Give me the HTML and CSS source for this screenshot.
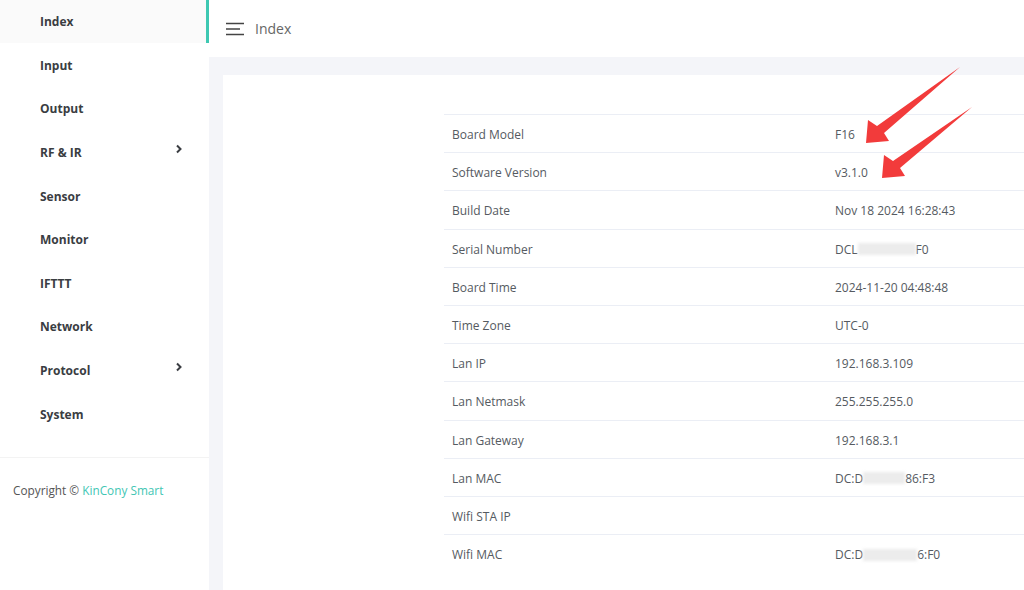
FILE: index.html
```html
<!DOCTYPE html>
<html lang="en">
<head>
    <meta charset="UTF-8">
    <meta name="viewport" content="width=device-width, initial-scale=1.0">
    <title>KinCony</title>
    <link rel="stylesheet" href="styles.css">
</head>
<body>
    <aside class="sidebar">
        <nav class="menu">
            <a class="menu-item active">Index</a>
            <a class="menu-item">Input</a>
            <a class="menu-item">Output</a>
            <a class="menu-item">RF &amp; IR <svg class="chevron" viewBox="0 0 8 10"><path d="M2 1.5 L5.5 5 L2 8.5" /></svg></a>
            <a class="menu-item">Sensor</a>
            <a class="menu-item">Monitor</a>
            <a class="menu-item">IFTTT</a>
            <a class="menu-item">Network</a>
            <a class="menu-item">Protocol <svg class="chevron" viewBox="0 0 8 10"><path d="M2 1.5 L5.5 5 L2 8.5" /></svg></a>
            <a class="menu-item">System</a>
        </nav>
        <div class="copyright">Copyright &copy; <span class="brand">KinCony Smart</span></div>
    </aside>

    <div class="main">
        <header class="topbar">
            <svg class="burger" viewBox="0 0 20 14">
                <path d="M1 1.5 H19 M1 7 H15 M1 12.5 H19" />
            </svg>
            <span class="page-title">Index</span>
        </header>

        <div class="content">
            <div class="card">
                <div class="info-table">
                    <div class="row"><div class="key">Board Model</div><div class="value">F16</div></div>
                    <div class="row"><div class="key">Software Version</div><div class="value">v3.1.0</div></div>
                    <div class="row"><div class="key">Build Date</div><div class="value">Nov 18 2024 16:28:43</div></div>
                    <div class="row"><div class="key">Serial Number</div><div class="value">DCL<span class="blur" style="width:58px"></span>F0</div></div>
                    <div class="row"><div class="key">Board Time</div><div class="value">2024-11-20 04:48:48</div></div>
                    <div class="row"><div class="key">Time Zone</div><div class="value">UTC-0</div></div>
                    <div class="row"><div class="key">Lan IP</div><div class="value">192.168.3.109</div></div>
                    <div class="row"><div class="key">Lan Netmask</div><div class="value">255.255.255.0</div></div>
                    <div class="row"><div class="key">Lan Gateway</div><div class="value">192.168.3.1</div></div>
                    <div class="row"><div class="key">Lan MAC</div><div class="value">DC:D<span class="blur" style="width:42px"></span>86:F3</div></div>
                    <div class="row"><div class="key">Wifi STA IP</div><div class="value"></div></div>
                    <div class="row"><div class="key">Wifi MAC</div><div class="value">DC:D<span class="blur" style="width:54px"></span>6:F0</div></div>
                </div>
            </div>
        </div>

        <!-- annotation arrows -->
        <svg class="arrows" viewBox="209 0 815 590">
            <polygon points="866,143 868,120 877,126 960,67 884,133 889,141" />
            <polygon points="882,178 884,155 893,161 972,107 900,168 905,176" />
        </svg>
    </div>
</body>
</html>
```

FILE: styles.css
```css
body {
    margin: 0;
    padding: 0;
    display: flex;
    height: 590px;
    overflow: hidden;
    font-family: "Open Sans", "Liberation Sans", sans-serif;
    color: #555;
    background-color: #f4f5f9;
}

.sidebar {
    width: 209px;
    flex-shrink: 0;
    background: white;
    display: flex;
    flex-direction: column;
}

.menu {
    padding-bottom: 21px;
    border-bottom: 1px solid #f3f3f3;
}

.menu-item {
    display: flex;
    align-items: center;
    justify-content: space-between;
    box-sizing: border-box;
    height: 43.6px;
    padding: 0 26px 0 40px;
    font-size: 12px;
    font-weight: 700;
    color: #3a3d42;
    cursor: pointer;
}

.menu-item.active {
    background-color: #fafafa;
    border-right: 3px solid #3ec8b2;
    height: 42.6px;
    margin-bottom: 1px;
}

.chevron {
    width: 8px;
    height: 10px;
    margin-top: -8px;
    fill: none;
    stroke: #3a3d42;
    stroke-width: 2;
}

.copyright {
    padding: 24px 0 0 13px;
    font-size: 11.8px;
    color: #555;
}

.brand {
    color: #42c6b4;
}

.main {
    flex: 1;
    min-width: 0;
    position: relative;
    overflow: hidden;
    display: flex;
    flex-direction: column;
}

.topbar {
    height: 57px;
    flex-shrink: 0;
    background: white;
    display: flex;
    align-items: center;
    padding-left: 16px;
}

.burger {
    width: 20px;
    height: 14px;
    fill: none;
    stroke: #444;
    stroke-width: 1.6;
}

.page-title {
    margin-left: 10px;
    font-size: 14px;
    color: #666;
}

.content {
    flex: 1;
    min-height: 0;
    padding: 18px 0 0 14px;
    display: flex;
}

.card {
    flex: 1;
    background: white;
    padding-top: 39px;
}

.info-table {
    margin-left: 221px;
}

.row {
    display: flex;
    align-items: center;
    box-sizing: border-box;
    height: 38.2px;
    padding-top: 2px;
    border-top: 1px solid #ebeef5;
    font-size: 12px;
    color: #555a61;
}

.key {
    width: 383px;
    box-sizing: border-box;
    padding-left: 8px;
}

.value {
    padding-left: 8px;
    display: flex;
    align-items: center;
}

.blur {
    display: inline-block;
    height: 12px;
    background-color: #ececec;
    filter: blur(1.5px);
}

.arrows {
    position: absolute;
    left: 0;
    top: 0;
    width: 815px;
    height: 590px;
    fill: #f23b3b;
    pointer-events: none;
}
```
